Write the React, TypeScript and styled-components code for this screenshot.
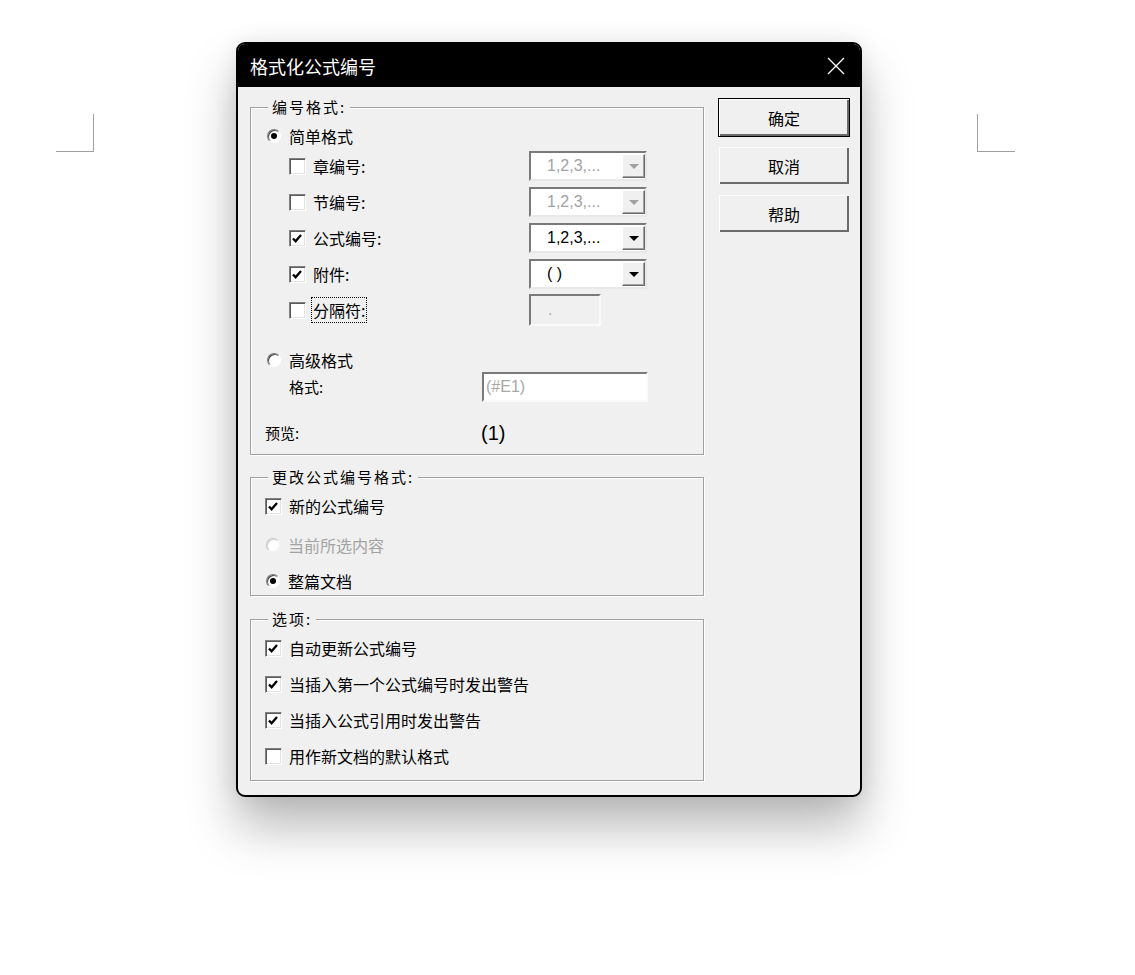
import React from 'react';
import styled, { createGlobalStyle } from 'styled-components';

const GlobalStyle = createGlobalStyle`
  body {
    margin: 0;
    background: #fff;
    font-family: "Noto Sans CJK SC", "Noto Sans", sans-serif;
    color: #000;
  }
`;

const Page = styled.div`
  display: flex;
  align-items: flex-start;
  padding-top: 42px;
  min-height: 975px;
  box-sizing: border-box;
`;

const CornerMark = styled.div<{ $side: 'left' | 'right' }>`
  box-sizing: border-box;
  width: 38px;
  height: 38px;
  margin-top: 72px;
  margin-left: ${(p) => (p.$side === 'left' ? '56px' : '115px')};
  border-bottom: 1px solid #a0a0a0;
  ${(p) => (p.$side === 'left' ? 'border-right' : 'border-left')}: 1px solid #a0a0a0;
`;

const Dialog = styled.div`
  box-sizing: border-box;
  width: 626px;
  margin-left: 142px;
  border: 2px solid #000;
  border-radius: 9px;
  overflow: hidden;
  background: #f0f0f0;
  box-shadow: 0 30px 50px rgba(0, 0, 0, 0.28), 0 0 22px rgba(0, 0, 0, 0.08);
`;

const TitleBar = styled.div`
  height: 43px;
  background: #000;
  color: #fff;
  display: flex;
  align-items: center;
  justify-content: space-between;
  padding: 0 15px 0 12px;
`;

const Title = styled.span`
  font-size: 18px;
  line-height: 24px;
`;

const Body = styled.div`
  display: grid;
  grid-template-columns: 454px 132px;
  column-gap: 14px;
  padding: 11px 9px 14px 12px;
`;

const LeftCol = styled.div`
  display: flex;
  flex-direction: column;
  padding-top: 9px;
`;

const RightCol = styled.div`
  display: flex;
  flex-direction: column;
  gap: 9px;
`;

const Group = styled.div<{ $h: number; $pt: number; $mt?: number }>`
  position: relative;
  box-sizing: border-box;
  height: ${(p) => p.$h}px;
  margin-top: ${(p) => p.$mt ?? 0}px;
  padding-top: ${(p) => p.$pt}px;
  border: 1px solid #a0a0a0;
  box-shadow: 1px 1px 0 #fff, inset 1px 1px 0 #fff;
`;

const Legend = styled.span`
  position: absolute;
  top: -11px;
  left: 17px;
  padding: 0 4px;
  background: #f0f0f0;
  font-size: 15px;
  line-height: 20px;
  letter-spacing: 2px;
`;

const Row = styled.div<{ $h: number; $indent: number; $mt?: number }>`
  display: flex;
  align-items: center;
  height: ${(p) => p.$h}px;
  padding-left: ${(p) => p.$indent}px;
  margin-top: ${(p) => p.$mt ?? 0}px;
`;

const Control = styled.div<{ $w?: number }>`
  display: flex;
  align-items: center;
  gap: 7px;
  width: ${(p) => (p.$w ? `${p.$w}px` : 'auto')};
  flex-shrink: 0;
`;

const Label = styled.span<{ $disabled?: boolean; $focus?: boolean; $small?: boolean }>`
  font-size: ${(p) => (p.$small ? 15 : 16)}px;
  line-height: 20px;
  white-space: nowrap;
  color: ${(p) => (p.$disabled ? '#a3a3a3' : '#000')};
  ${(p) =>
    p.$focus &&
    `
    border: 1px dotted #000;
    padding: 2px 1px;
    margin-left: -2px;
  `}
`;

const Box = styled.span`
  box-sizing: border-box;
  width: 17px;
  height: 17px;
  background: #fff;
  border: 1px solid;
  border-color: #808080 #fff #fff #808080;
  box-shadow: inset 1px 1px 0 #5a5a5a, inset -1px -1px 0 #e3e3e3;
  display: flex;
  align-items: center;
  justify-content: center;
  flex-shrink: 0;
`;

const RadioSlot = styled.span`
  width: 16px;
  display: flex;
  justify-content: center;
  flex-shrink: 0;
`;

const RadioCircle = styled.span<{ $disabled?: boolean }>`
  box-sizing: border-box;
  width: 14px;
  height: 14px;
  border-radius: 50%;
  background: #fff;
  border: 1px solid;
  border-color: ${(p) =>
    p.$disabled ? '#c4c4c4 #f4f4f4 #f4f4f4 #c4c4c4' : '#7a7a7a #fff #fff #7a7a7a'};
  box-shadow: ${(p) =>
    p.$disabled ? 'inset 1px 1px 0 #d8d8d8' : 'inset 1px 1px 0 #404040'};
  display: flex;
  align-items: center;
  justify-content: center;
`;

const RadioDot = styled.span`
  width: 6px;
  height: 6px;
  border-radius: 50%;
  background: #000;
`;

const Select = styled.div`
  box-sizing: border-box;
  width: 118px;
  height: 30px;
  border: 2px solid;
  border-color: #7a7a7a #e8e8e8 #e8e8e8 #7a7a7a;
  background: #fff;
  display: flex;
`;

const SelectText = styled.span<{ $disabled?: boolean }>`
  flex: 1;
  padding-left: 16px;
  font-family: "Liberation Sans", Arial, sans-serif;
  font-size: 16px;
  line-height: 26px;
  color: ${(p) => (p.$disabled ? '#a3a3a3' : '#000')};
`;

const ArrowButton = styled.span`
  box-sizing: border-box;
  width: 23px;
  margin: 1px 0;
  background: #f0f0f0;
  border: 1px solid;
  border-color: #fff #6b6b6b #6b6b6b #fff;
  box-shadow: inset -1px -1px 0 #a0a0a0;
  display: flex;
  align-items: center;
  justify-content: center;
`;

const Triangle = styled.span<{ $disabled?: boolean }>`
  width: 0;
  height: 0;
  border-left: 5px solid transparent;
  border-right: 5px solid transparent;
  border-top: 5px solid ${(p) => (p.$disabled ? '#a0a0a0' : '#000')};
  margin-top: 1px;
`;

const TextBox = styled.div<{ $w: number; $h: number; $disabled?: boolean }>`
  box-sizing: border-box;
  width: ${(p) => p.$w}px;
  height: ${(p) => p.$h}px;
  border: 2px solid;
  border-color: #7a7a7a #fafafa #fafafa #7a7a7a;
  background: ${(p) => (p.$disabled ? '#f0f0f0' : '#fff')};
  padding-left: ${(p) => (p.$disabled ? 17 : 2)}px;
  font-family: "Liberation Sans", Arial, sans-serif;
  font-size: 16px;
  line-height: ${(p) => p.$h - 4}px;
  color: #a8a8a8;
`;

const Preview = styled.span`
  font-family: "Liberation Sans", Arial, sans-serif;
  font-size: 20px;
  line-height: 24px;
`;

const Button = styled.button<{ $default?: boolean }>`
  box-sizing: border-box;
  width: 132px;
  height: 39px;
  margin: 0;
  padding: 0;
  background: #f0f0f0;
  border: 1px solid ${(p) => (p.$default ? '#000' : 'transparent')};
  box-shadow: inset 1px 1px 0 #fff, inset -2px -2px 0 #6b6b6b;
  font-family: "Noto Sans CJK SC", sans-serif;
  font-size: 16px;
  color: #000;
`;

const Check = () => (
  <svg width="13" height="13" viewBox="0 0 13 13">
    <path d="M2 6.5 L4.6 9.2 L10 3" fill="none" stroke="#000" strokeWidth="2.3" />
  </svg>
);

const Checkbox: React.FC<{ checked?: boolean }> = ({ checked }) => (
  <Box>{checked && <Check />}</Box>
);

const Radio: React.FC<{ checked?: boolean; disabled?: boolean }> = ({ checked, disabled }) => (
  <RadioSlot>
    <RadioCircle $disabled={disabled}>{checked && <RadioDot />}</RadioCircle>
  </RadioSlot>
);

const Dropdown: React.FC<{ value: string; disabled?: boolean }> = ({ value, disabled }) => (
  <Select>
    <SelectText $disabled={disabled}>{value}</SelectText>
    <ArrowButton>
      <Triangle $disabled={disabled} />
    </ArrowButton>
  </Select>
);

const CloseIcon = () => (
  <svg width="18" height="18" viewBox="0 0 18 18">
    <path d="M1 1 L17 17 M17 1 L1 17" stroke="#fff" strokeWidth="1.3" />
  </svg>
);

const numberParts = [
  { label: '章编号:', value: '1,2,3,...', checked: false, disabled: true },
  { label: '节编号:', value: '1,2,3,...', checked: false, disabled: true },
  { label: '公式编号:', value: '1,2,3,...', checked: true, disabled: false },
  { label: '附件:', value: '( )', checked: true, disabled: false },
];

const options = [
  { label: '自动更新公式编号', checked: true },
  { label: '当插入第一个公式编号时发出警告', checked: true },
  { label: '当插入公式引用时发出警告', checked: true },
  { label: '用作新文档的默认格式', checked: false },
];

const App: React.FC = () => (
  <>
    <GlobalStyle />
    <Page>
      <CornerMark $side="left" />
      <Dialog>
        <TitleBar>
          <Title>格式化公式编号</Title>
          <CloseIcon />
        </TitleBar>
        <Body>
          <LeftCol>
            <Group $h={348} $pt={16}>
              <Legend>编号格式:</Legend>
              <Row $h={24} $indent={15}>
                <Control>
                  <Radio checked />
                  <Label>简单格式</Label>
                </Control>
              </Row>
              {numberParts.map((part) => (
                <Row key={part.label} $h={36} $indent={38}>
                  <Control $w={240}>
                    <Checkbox checked={part.checked} />
                    <Label>{part.label}</Label>
                  </Control>
                  <Dropdown value={part.value} disabled={part.disabled} />
                </Row>
              ))}
              <Row $h={36} $indent={38}>
                <Control $w={240}>
                  <Checkbox />
                  <Label $focus>分隔符:</Label>
                </Control>
                <TextBox $w={72} $h={32} $disabled>
                  .
                </TextBox>
              </Row>
              <Row $h={24} $indent={15} $mt={20}>
                <Control>
                  <Radio />
                  <Label>高级格式</Label>
                </Control>
              </Row>
              <Row $h={29} $indent={38}>
                <Control $w={193}>
                  <Label $small>格式:</Label>
                </Control>
                <TextBox $w={166} $h={30}>
                  (#E1)
                </TextBox>
              </Row>
              <Row $h={24} $indent={14} $mt={20}>
                <Control $w={216}>
                  <Label $small>预览:</Label>
                </Control>
                <Preview>(1)</Preview>
              </Row>
            </Group>

            <Group $h={119} $pt={16} $mt={22}>
              <Legend>更改公式编号格式:</Legend>
              <Row $h={24} $indent={14}>
                <Control>
                  <Checkbox checked />
                  <Label>新的公式编号</Label>
                </Control>
              </Row>
              <Row $h={24} $indent={14} $mt={15}>
                <Control>
                  <Radio disabled />
                  <Label $disabled>当前所选内容</Label>
                </Control>
              </Row>
              <Row $h={24} $indent={14} $mt={12}>
                <Control>
                  <Radio checked />
                  <Label>整篇文档</Label>
                </Control>
              </Row>
            </Group>

            <Group $h={162} $pt={10} $mt={23}>
              <Legend>选项:</Legend>
              {options.map((opt) => (
                <Row key={opt.label} $h={36} $indent={14}>
                  <Control>
                    <Checkbox checked={opt.checked} />
                    <Label>{opt.label}</Label>
                  </Control>
                </Row>
              ))}
            </Group>
          </LeftCol>

          <RightCol>
            <Button $default>确定</Button>
            <Button>取消</Button>
            <Button>帮助</Button>
          </RightCol>
        </Body>
      </Dialog>
      <CornerMark $side="right" />
    </Page>
  </>
);

export default App;
